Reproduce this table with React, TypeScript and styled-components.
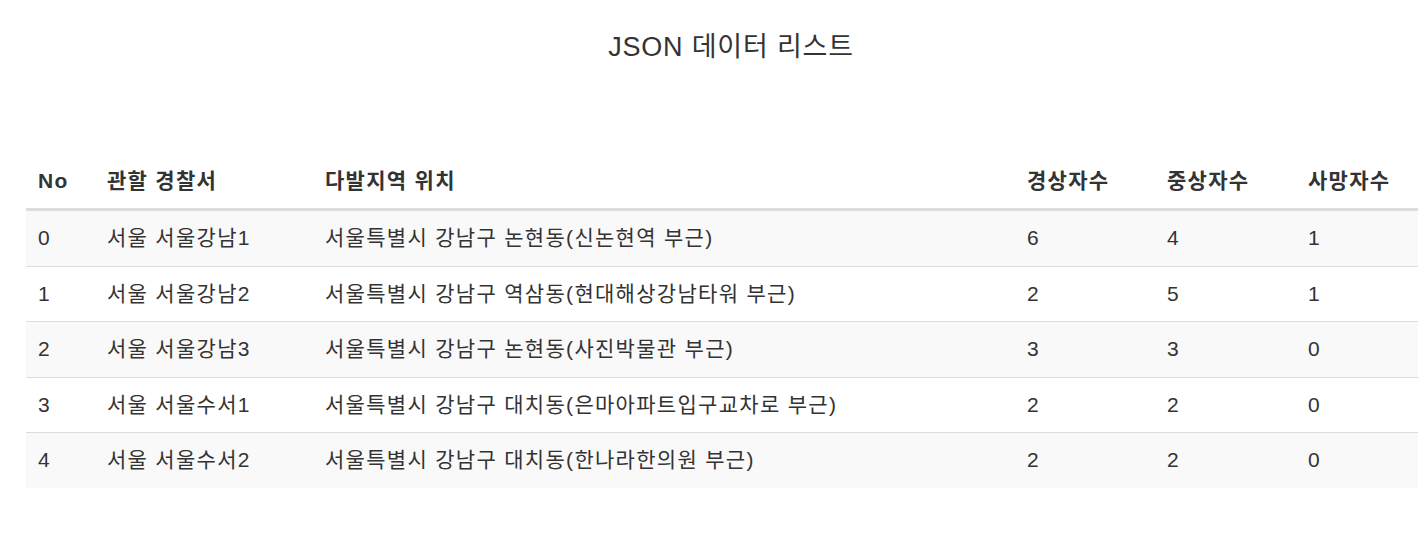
import React from 'react'
import styled, { createGlobalStyle } from 'styled-components'

const GlobalStyle = createGlobalStyle`
  html, body {
    margin: 0;
    padding: 0;
    background: #fff;
    overflow: hidden;
  }
  body {
    font-family: "Liberation Sans", "Noto Sans CJK KR", Arial, sans-serif;
    color: #333;
  }
`

const Page = styled.div`
  width: 1462px;
  padding-top: 32px;
`

const Title = styled.h4`
  margin: 0 0 92px;
  font-size: 27px;
  font-weight: 400;
  line-height: 30px;
  letter-spacing: 0.8px;
  text-align: center;
  color: #333;
`

const TableWrap = styled.div`
  padding: 0 26px;
`

const Table = styled.table`
  width: 100%;
  table-layout: fixed;
  border-collapse: collapse;
  border-spacing: 0;
  font-size: 21px;
  line-height: 30px;
  letter-spacing: 1.3px;
`

const HeadCell = styled.th`
  text-align: left;
  font-weight: 700;
  padding: 12px;
  border-bottom: 3px solid #ddd;
  white-space: nowrap;
`

const Row = styled.tr<{ $striped: boolean }>`
  background: ${({ $striped }) => ($striped ? '#f9f9f9' : '#fff')};
`

const Cell = styled.td`
  padding: 12px 12px 12.5px;
  border-top: 1px solid #ddd;
  white-space: nowrap;
`

const columns = [
  { label: 'No', width: 69 },
  { label: '관할 경찰서', width: 218 },
  { label: '다발지역 위치', width: 702 },
  { label: '경상자수', width: 140 },
  { label: '중상자수', width: 141 },
  { label: '사망자수', width: 140 },
]

const rows = [
  ['0', '서울 서울강남1', '서울특별시 강남구 논현동(신논현역 부근)', '6', '4', '1'],
  ['1', '서울 서울강남2', '서울특별시 강남구 역삼동(현대해상강남타워 부근)', '2', '5', '1'],
  ['2', '서울 서울강남3', '서울특별시 강남구 논현동(사진박물관 부근)', '3', '3', '0'],
  ['3', '서울 서울수서1', '서울특별시 강남구 대치동(은마아파트입구교차로 부근)', '2', '2', '0'],
  ['4', '서울 서울수서2', '서울특별시 강남구 대치동(한나라한의원 부근)', '2', '2', '0'],
]

export default function App() {
  return (
    <Page>
      <GlobalStyle />
      <Title>JSON 데이터 리스트</Title>
      <TableWrap>
        <Table>
          <colgroup>
            {columns.map((c) => (
              <col key={c.label} style={{ width: c.width }} />
            ))}
          </colgroup>
          <thead>
            <tr>
              {columns.map((c) => (
                <HeadCell key={c.label}>{c.label}</HeadCell>
              ))}
            </tr>
          </thead>
          <tbody>
            {rows.map((r, i) => (
              <Row key={r[0]} $striped={i % 2 === 0}>
                {r.map((v, j) => (
                  <Cell key={j}>{v}</Cell>
                ))}
              </Row>
            ))}
          </tbody>
        </Table>
      </TableWrap>
    </Page>
  )
}
